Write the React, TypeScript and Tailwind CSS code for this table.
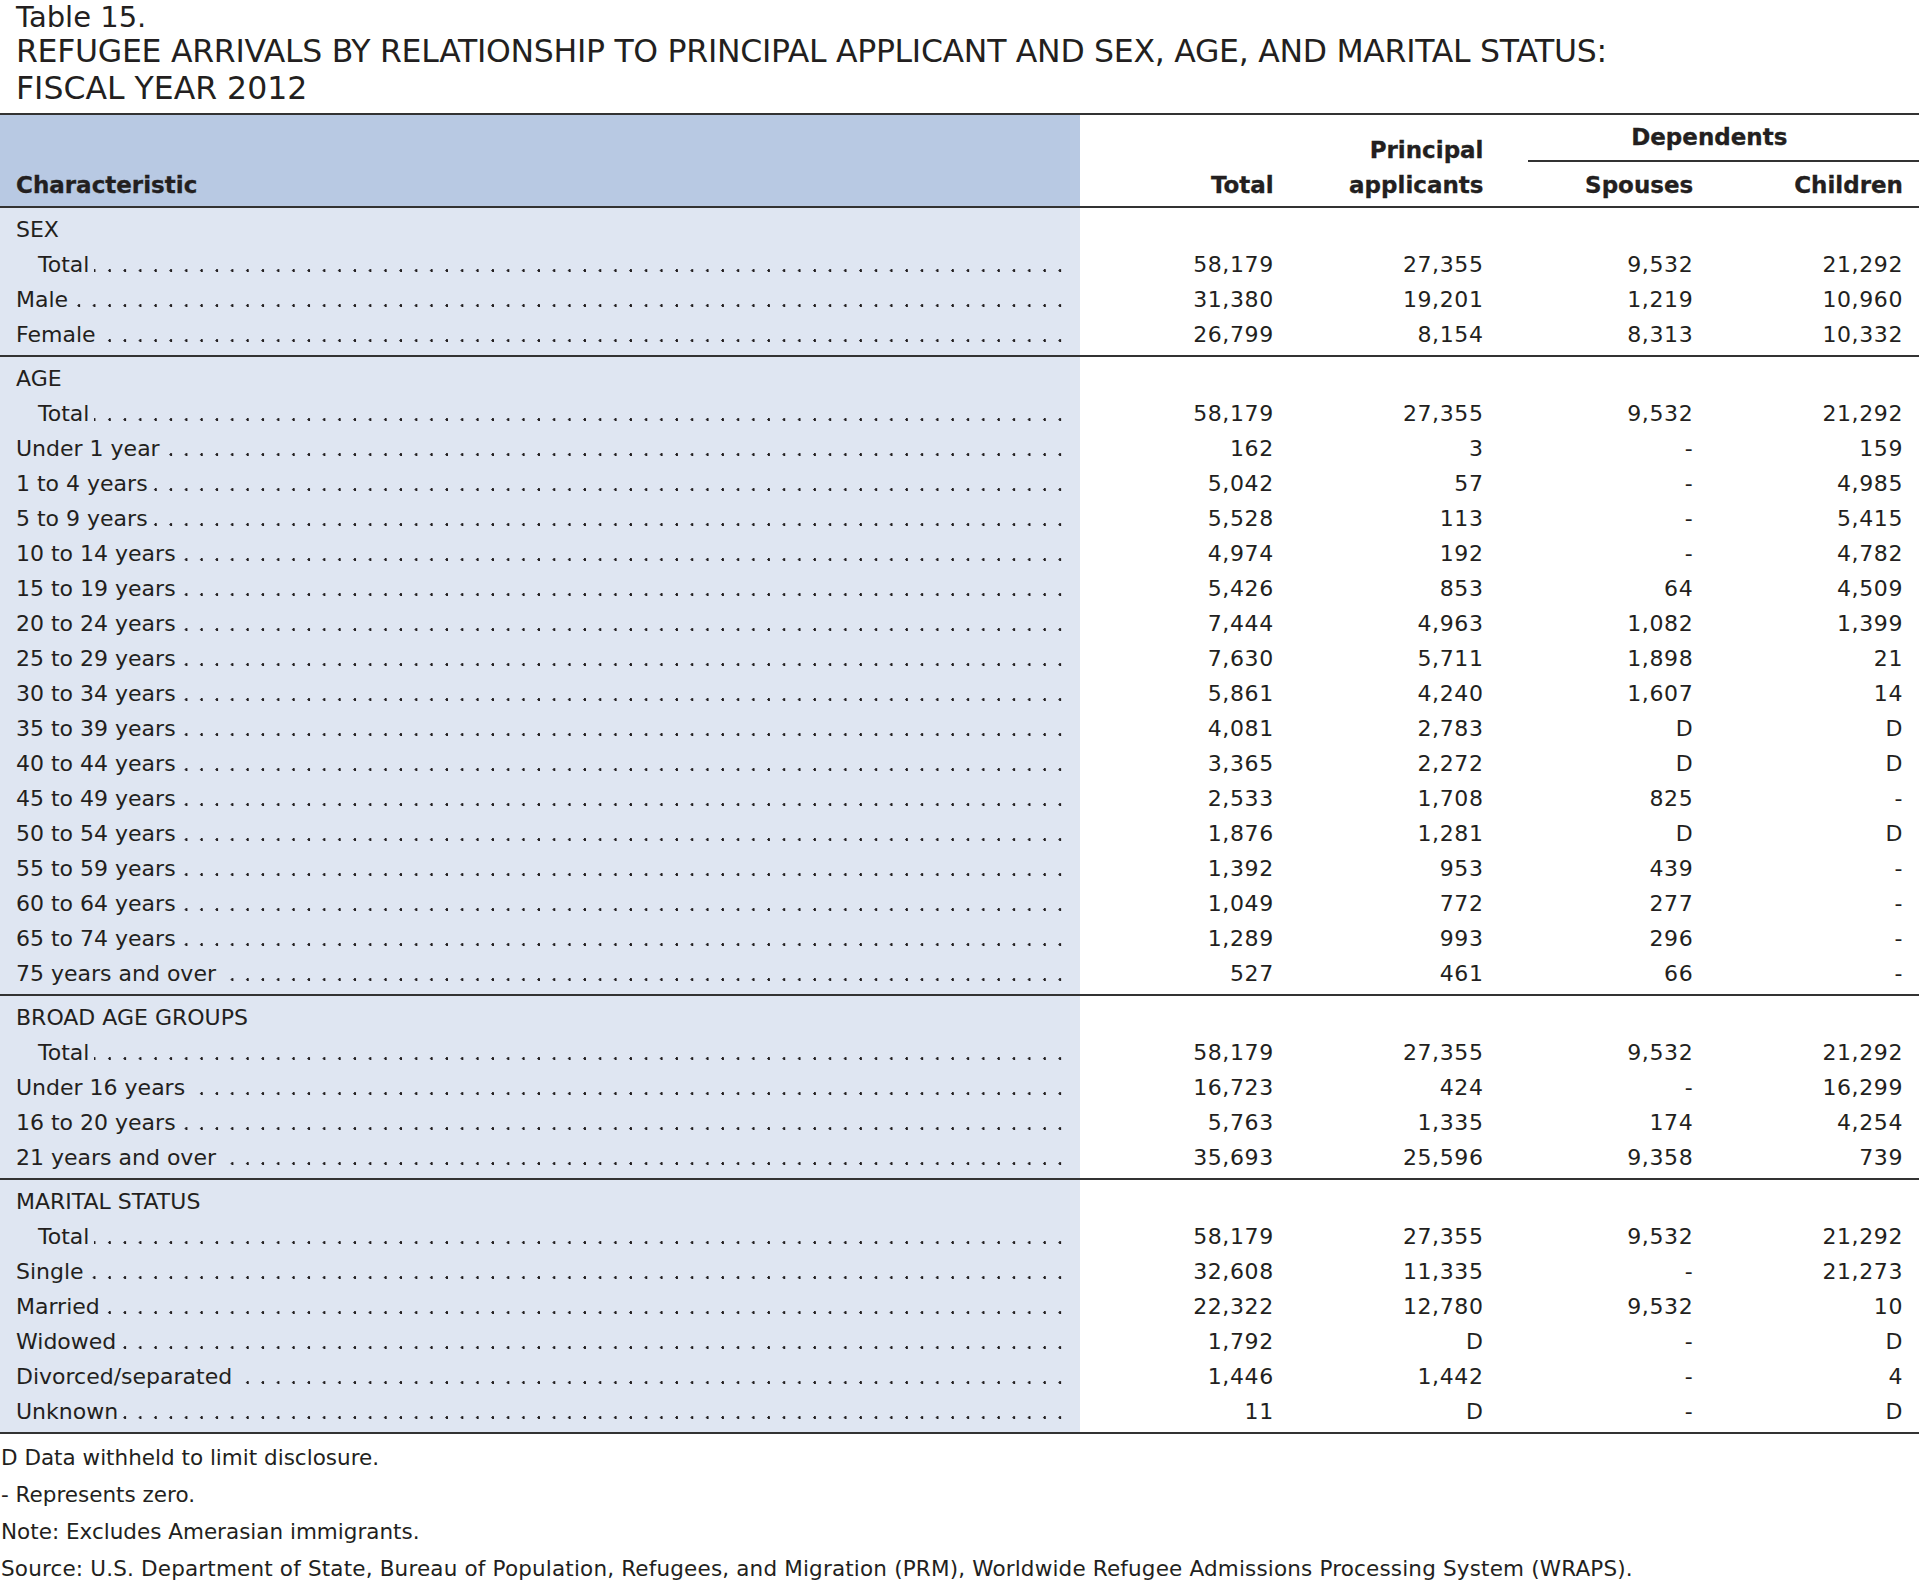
import React from "react";

type Row = { label: string; indent?: boolean; v: [string, string, string, string] };
type Section = { title: string; rows: Row[] };

const T: [string, string, string, string] = ["58,179", "27,355", "9,532", "21,292"];

const sections: Section[] = [
  {
    title: "SEX",
    rows: [
      { label: "Total", indent: true, v: T },
      { label: "Male", v: ["31,380", "19,201", "1,219", "10,960"] },
      { label: "Female", v: ["26,799", "8,154", "8,313", "10,332"] },
    ],
  },
  {
    title: "AGE",
    rows: [
      { label: "Total", indent: true, v: T },
      { label: "Under 1 year", v: ["162", "3", "-", "159"] },
      { label: "1 to 4 years", v: ["5,042", "57", "-", "4,985"] },
      { label: "5 to 9 years", v: ["5,528", "113", "-", "5,415"] },
      { label: "10 to 14 years", v: ["4,974", "192", "-", "4,782"] },
      { label: "15 to 19 years", v: ["5,426", "853", "64", "4,509"] },
      { label: "20 to 24 years", v: ["7,444", "4,963", "1,082", "1,399"] },
      { label: "25 to 29 years", v: ["7,630", "5,711", "1,898", "21"] },
      { label: "30 to 34 years", v: ["5,861", "4,240", "1,607", "14"] },
      { label: "35 to 39 years", v: ["4,081", "2,783", "D", "D"] },
      { label: "40 to 44 years", v: ["3,365", "2,272", "D", "D"] },
      { label: "45 to 49 years", v: ["2,533", "1,708", "825", "-"] },
      { label: "50 to 54 years", v: ["1,876", "1,281", "D", "D"] },
      { label: "55 to 59 years", v: ["1,392", "953", "439", "-"] },
      { label: "60 to 64 years", v: ["1,049", "772", "277", "-"] },
      { label: "65 to 74 years", v: ["1,289", "993", "296", "-"] },
      { label: "75 years and over", v: ["527", "461", "66", "-"] },
    ],
  },
  {
    title: "BROAD AGE GROUPS",
    rows: [
      { label: "Total", indent: true, v: T },
      { label: "Under 16 years", v: ["16,723", "424", "-", "16,299"] },
      { label: "16 to 20 years", v: ["5,763", "1,335", "174", "4,254"] },
      { label: "21 years and over", v: ["35,693", "25,596", "9,358", "739"] },
    ],
  },
  {
    title: "MARITAL STATUS",
    rows: [
      { label: "Total", indent: true, v: T },
      { label: "Single", v: ["32,608", "11,335", "-", "21,273"] },
      { label: "Married", v: ["22,322", "12,780", "9,532", "10"] },
      { label: "Widowed", v: ["1,792", "D", "-", "D"] },
      { label: "Divorced/separated", v: ["1,446", "1,442", "-", "4"] },
      { label: "Unknown", v: ["11", "D", "-", "D"] },
    ],
  },
];

function DataRow({ row }: { row: Row }) {
  return (
    <div className="grid h-[35px] grid-cols-[1080px_1fr_1fr_1fr_1fr] leading-[35px]">
      <div className="pl-[16px] pr-[12px]">
        <div className="h-full bg-repeat-x [background-image:radial-gradient(circle_at_7.5px_23.6px,#231f20_1.2px,transparent_1.6px)] [background-position:-5.8px_0] [background-size:15.33px_35px]">
          <span className={`inline-block h-full whitespace-nowrap bg-[#dfe6f2] pr-[5px] ${row.indent ? "pl-[22px]" : ""}`}>
            {row.label}
          </span>
        </div>
      </div>
      {row.v.map((v, i) => (
        <div key={i} className="pr-[16px] text-right tracking-[0.6px]">
          {v}
        </div>
      ))}
    </div>
  );
}

function SectionBlock({ s }: { s: Section }) {
  return (
    <div className="border-b-2 border-[#333333] bg-[linear-gradient(to_right,#dfe6f2_1080px,#ffffff_1080px)] pb-[3px] pt-[4px]">
      <div className="h-[35px] pl-[16px] leading-[35px]">{s.title}</div>
      {s.rows.map((r, i) => (
        <DataRow key={i} row={r} />
      ))}
    </div>
  );
}

export default function App() {
  return (
    <div className="h-[1582px] w-full overflow-hidden bg-white font-['DejaVu_Sans',sans-serif] text-[#231f20]">
      <div className="pl-[16px]">
        <div className="text-[29px] leading-[34px]">Table 15.</div>
        <div className="mt-[-1.4px] text-[31.5px] leading-[37px] tracking-[-0.28px]">
          REFUGEE ARRIVALS BY RELATIONSHIP TO PRINCIPAL APPLICANT AND SEX, AGE, AND MARITAL STATUS:
        </div>
        <div className="text-[31.5px] leading-[37px]">FISCAL YEAR 2012</div>
      </div>

      <div className="mt-[6.4px] grid h-[95px] grid-cols-[1080px_1fr_1fr_1fr_1fr] border-y-2 border-[#333333] text-[23px] font-bold leading-[35px] [-webkit-text-stroke:0.3px_#231f20]">
        <div className="flex items-end bg-[#b8c9e3] pb-[3px] pl-[16px]">Characteristic</div>
        <div className="flex items-end justify-end pb-[3px] pr-[16px]">Total</div>
        <div className="flex flex-col items-end justify-end pb-[3px] pr-[16px]">
          <div>Principal</div>
          <div>applicants</div>
        </div>
        <div className="col-span-2 flex flex-col justify-end pb-[3px]">
          <div className="text-center">Dependents</div>
          <div className="mb-[6px] ml-[28px] mt-[5px] h-[2px] bg-[#333333]" />
          <div className="grid grid-cols-2">
            <div className="pr-[16px] text-right">Spouses</div>
            <div className="pr-[16px] text-right">Children</div>
          </div>
        </div>
      </div>

      <div className="text-[22px]">
        {sections.map((s, i) => (
          <SectionBlock key={i} s={s} />
        ))}
      </div>

      <div className="pl-[1px] pt-[5px] text-[21.5px] leading-[37px]">
        <div>D Data withheld to limit disclosure.</div>
        <div>- Represents zero.</div>
        <div>Note: Excludes Amerasian immigrants.</div>
        <div className="tracking-[0.17px]">
          Source: U.S. Department of State, Bureau of Population, Refugees, and Migration (PRM), Worldwide Refugee
          Admissions Processing System (WRAPS).
        </div>
      </div>
    </div>
  );
}
